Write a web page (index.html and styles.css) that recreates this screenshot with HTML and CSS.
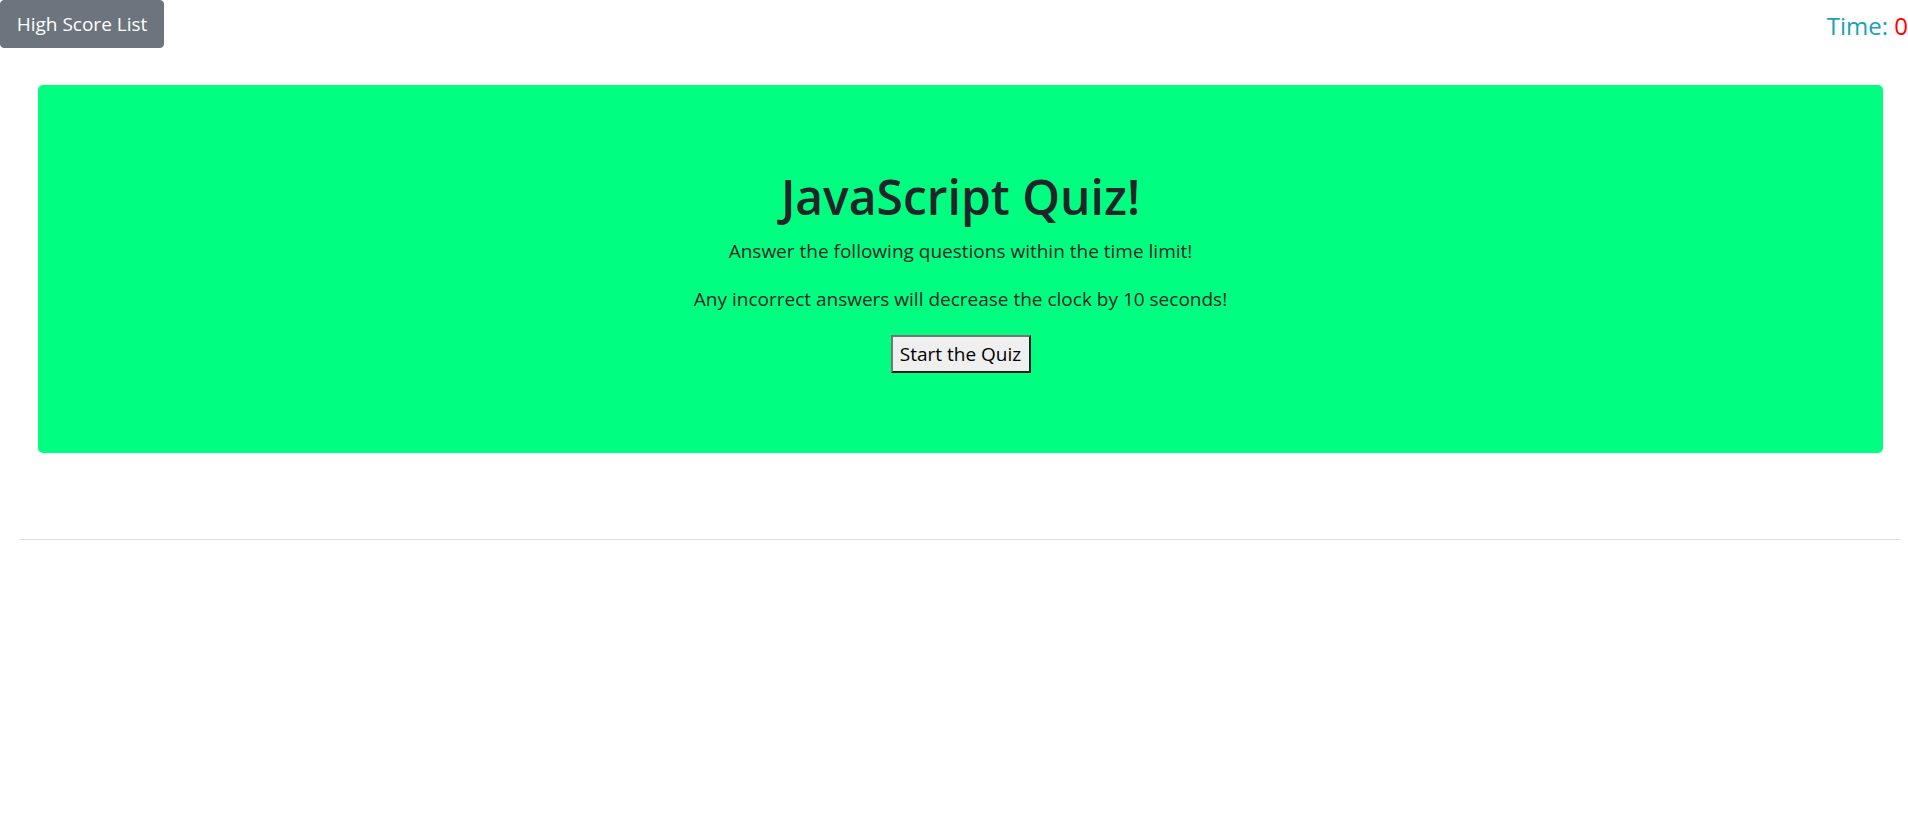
FILE: index.html
```html
<!DOCTYPE html>
<html lang="en">
<head>
<meta charset="utf-8">
<title>JavaScript Quiz</title>
<link rel="stylesheet" href="styles.css">
</head>
<body>
<header class="topbar">
  <button class="btn-scores" type="button">High Score List</button>
  <div class="timer">Time: <span class="time-val">0</span></div>
</header>
<main class="jumbo">
  <h1 class="title">JavaScript Quiz!</h1>
  <p class="lead">Answer the following questions within the time limit!</p>
  <p class="lead">Any incorrect answers will decrease the clock by 10 seconds!</p>
  <button class="btn-start" type="button">Start the Quiz</button>
</main>
<hr class="divider">
</body>
</html>
```

FILE: styles.css
```css
html, body {
  margin: 0;
  padding: 0;
  overflow-x: hidden;
}
body {
  font-family: "Open Sans", "Noto Sans", sans-serif;
  color: #212529;
  background: #fff;
  font-size: 16px;
  line-height: 1.5;
}
.topbar {
  display: flex;
  justify-content: space-between;
  align-items: flex-start;
  height: 48px;
}
.btn-scores {
  font-family: inherit;
  font-size: 19px;
  line-height: 30px;
  height: 48px;
  width: 164px;
  padding: 8px 0;
  color: #fff;
  background: #6c757d;
  border: 1px solid #6c757d;
  border-radius: 4px;
  cursor: pointer;
}
.timer {
  font-size: 24px;
  line-height: 30px;
  padding-top: 11px;
  color: #17a2b8;
  margin-right: 0;
  white-space: nowrap;
}
.time-val {
  color: #ff0000;
}
.jumbo {
  margin: 37px 25px 0 38px;
  background: #00ff80;
  border-radius: 5px;
  height: 368px;
  box-sizing: border-box;
  padding-top: 82px;
  display: flex;
  flex-direction: column;
  align-items: center;
}
.title {
  margin: 0 0 9px;
  font-size: 48px;
  font-weight: 600;
  line-height: 60px;
}
.lead {
  margin: 0 0 18px;
  font-size: 19px;
  line-height: 30px;
}
.btn-start {
  font-family: inherit;
  font-size: 19px;
  line-height: 24px;
  height: 38px;
  width: 140px;
  padding: 0;
  color: #000;
  background: #efefef;
  border: 2px solid;
  border-color: #767676 #1f1f1f #1f1f1f #767676;
  margin-top: 3px;
}
.divider {
  margin: 86px 7px 0 19px;
  border: 0;
  border-top: 1px solid #dedede;
}
```
